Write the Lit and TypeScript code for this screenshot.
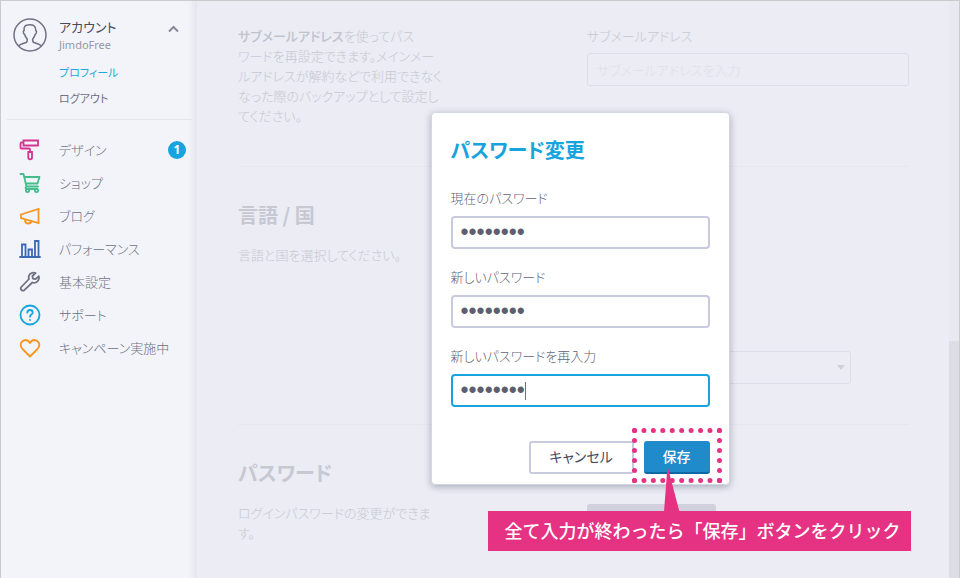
import { LitElement, html, css, svg } from "lit";
import { customElement } from "lit/decorators.js";

const icon = (color: string, body: unknown) => html`<svg
  width="22"
  height="22"
  viewBox="0 0 22 22"
  fill="none"
  stroke=${color}
  stroke-width="1.8"
  stroke-linejoin="round"
  stroke-linecap="round"
  aria-hidden="true"
>${body}</svg>`;

const MENU = [
  {
    label: "デザイン",
    badge: 1,
    icon: icon("#d3358f", svg`<path stroke-linejoin="miter" d="M4.500 1.500h14.500v5H4.500zM4.500 3.500H2.500Q1.500 3.500 1.500 4.500V8.500q0 1 1 1h7.500q1 0 1 1V13M9.300 13h3.700v5.500q0 1.800-1.850 1.800t-1.850-1.800z"/>`),
  },
  {
    label: "ショップ",
    icon: icon("#43bd89", svg`<path d="M1.500 2H4.500L7.500 14.500H19M5.500 5H20.500L18.500 11.500H7M7.500 14.500q-1.500 1-.5 2.500H18"/><circle cx="8.500" cy="18.500" r="1.600"/><circle cx="17.500" cy="18.500" r="1.600"/>`),
  },
  {
    label: "ブログ",
    icon: icon("#f9951d", svg`<path stroke-linejoin="miter" d="M2 9.500L19.500 4v14L2 13zM6 14.500q0 4 3 4t3.500-2.500"/>`),
  },
  {
    label: "パフォーマンス",
    icon: icon("#3a68b3", svg`<path stroke-linejoin="miter" d="M1 19h20M3 19V6.500h3.500V19M9.500 19v-7.500H13V19M16 19V3h3.500v16"/>`),
  },
  {
    label: "基本設定",
    icon: icon("#6d7182", svg`<path d="M19.800 5.200l-3.300 2.900-2.600-.5-.5-2.600L16.600 2q-3.200-1.200-5.600 1-2 2.200-1 5L2.300 16q-1.200 1.500 0 2.900t3 .3L13.300 11.500q3 1 5.200-1.100 2.100-2.300 1.300-5.200z"/>`),
  },
  {
    label: "サポート",
    icon: icon("#17a3de", svg`<circle cx="11" cy="11" r="9.500"/><path stroke-width="1.800" d="M8.300 8.700q0-2.700 2.700-2.700t2.700 2.500q0 1.200-1.400 2.100T11 12.800M11 15.800v.2"/>`),
  },
  {
    label: "キャンペーン実施中",
    icon: icon("#f9951d", svg`<path d="M11 19.500L3.500 12Q.5 8.500 2.300 5.500 4 3 6.800 3 9.500 3.200 11 6 12.500 3.200 15.200 3q2.800 0 4.500 2.500 1.800 3-1.200 6.500z"/>`),
  },
];

const FIELDS = [
  { id: "current", label: "現在のパスワード" },
  { id: "next", label: "新しいパスワード" },
  { id: "repeat", label: "新しいパスワードを再入力", active: true },
];

@customElement("app-sidebar")
class AppSidebar extends LitElement {
  static styles = css`
    :host {
      display: block;
      box-sizing: border-box;
      padding: 16px 5px 16px 6px;
      background: linear-gradient(to left, #e4e6ee 0, #f3f4f9 9px);
      color: #6d7182;
      font-size: 13px;
    }
    .account {
      display: grid;
      grid-template-columns: 34px 1fr 14px;
      column-gap: 12px;
      align-items: start;
      padding: 0 12px 0 6px;
    }
    .avatar { margin-top: 1px; }
    .name { line-height: 19px; font-size: 13px; color: #464a5c; font-weight: 400; }
    .plan { font: 11px/17px "Noto Sans", sans-serif; color: #9598a6; }
    .toggle {
      border: 0;
      padding: 0;
      margin-top: 4px;
      height: 16px;
      background: none;
      color: #858998;
    }
    .links {
      display: flex;
      flex-direction: column;
      gap: 6px;
      padding: 9px 0 11px 52px;
      border-bottom: 1px solid #e2e4eb;
      font-size: 11px;
      line-height: 20px;
      font-weight: 400;
    }
    a { color: inherit; text-decoration: none; }
    .links .current { color: #1ea7e0; }
    ul { list-style: none; margin: 0; padding: 13px 6px 0 12px; }
    .item { display: flex; align-items: center; height: 33px; }
    .item svg { flex: none; margin-right: 18px; }
    .text { flex: 1; white-space: nowrap; }
    .badge {
      width: 18px;
      height: 18px;
      border-radius: 50%;
      background: #17a3de;
      color: #fff;
      text-align: center;
      font: bold 12px/18px "Noto Sans", sans-serif;
    }
  `;

  render() {
    return html`
      <div class="account">
        <svg class="avatar" width="34" height="34" viewBox="0 0 34 34" fill="none" stroke="#6d7182" stroke-width="1.500" aria-hidden="true">
          <circle cx="17" cy="17" r="16" />
          <path d="M5.500 28q1-1.500 7.500-3.500 1.500-.6 1.200-3.500-2-2-2.500-4.500-1.400-.5-1.400-2.700 0-1.200.8-1.300Q10.500 7.500 14.500 7q8.500-1.500 8.300 5.500.8.100.7 1.500-.2 2.100-1.400 2.500-.5 2.500-2.400 4.500-.3 2.900 1.200 3.500 6.500 2 7.500 3.500" />
        </svg>
        <div>
          <div class="name">アカウント</div>
          <div class="plan">JimdoFree</div>
        </div>
        <button class="toggle" aria-label="アカウントメニューを閉じる" aria-expanded="true">
          <svg width="14" height="10" viewBox="0 0 14 10" fill="none" stroke="currentColor" stroke-width="2"><path d="M3 7.500l4.500-4.500L12 7.500" /></svg>
        </button>
      </div>
      <div class="links">
        <a class="current" href="#profile">プロフィール</a>
        <a href="#logout">ログアウト</a>
      </div>
      <nav>
        <ul>
          ${MENU.map(
            (m) => html`<li>
              <a class="item" href="#menu">${m.icon}<span class="text">${m.label}</span>${m.badge ? html`<span class="badge">${m.badge}</span>` : ""}</a>
            </li>`
          )}
        </ul>
      </nav>
    `;
  }
}

@customElement("app-profile")
class AppProfile extends LitElement {
  static styles = css`
    :host { display: block; color: #c6c8d4; font-size: 13px; line-height: 20px; }
    section {
      display: grid;
      grid-template-columns: 30% 48%;
      justify-content: space-between;
      padding: 28px 0 40px;
      border-top: 1px solid #e6e7ef;
    }
    section:first-child { border-top: 0; padding-top: 25px; }
    h2 { margin: 0 0 10px; font-size: 20px; line-height: 40px; font-weight: 700; color: #c6c8d2; }
    p { margin: 0; white-space: nowrap; }
    b { font-weight: 500; color: #c0c2ce; }
    label { display: block; margin-bottom: 7px; }
    input, select {
      box-sizing: border-box;
      height: 33px;
      border: 1px solid #dbdde8;
      border-radius: 3px;
      padding: 0 9px;
      background: transparent;
      font: inherit;
      color: inherit;
    }
    input { width: 100%; }
    input::placeholder { color: #dfe0ea; opacity: 1; }
    .pick { position: relative; width: 82%; margin-top: 156px; }
    select { display: block; width: 100%; appearance: none; }
    .arrow { position: absolute; right: 6px; top: 14px; }
    .change {
      width: 40%;
      height: 33px;
      margin-top: 51px;
      border: 0;
      border-radius: 3px;
      background: #d0d1dd;
    }
  `;

  render() {
    return html`
      <section>
        <p>
          <b>サブメールアドレス</b>を使ってパス<br />ワードを再設定できます。メインメー<br />ルアドレスが解約などで利用できなく<br />なった際のバックアップとして設定し<br />てください。
        </p>
        <div>
          <label for="mail">サブメールアドレス</label>
          <input id="mail" type="email" placeholder="サブメールアドレスを入力" />
        </div>
      </section>
      <section>
        <div>
          <h2>言語 / 国</h2>
          <p>言語と国を選択してください。</p>
        </div>
        <div class="pick">
          <select aria-label="国"><option></option></select>
          <svg class="arrow" width="8" height="5" viewBox="0 0 8 5" fill="#cfd0db" aria-hidden="true"><path d="M0 0h8L4 5z" /></svg>
        </div>
      </section>
      <section>
        <div>
          <h2>パスワード</h2>
          <p>ログインパスワードの変更ができま<br />す。</p>
        </div>
        <div><button class="change" aria-label="パスワードを変更"></button></div>
      </section>
    `;
  }
}

@customElement("password-dialog")
class PasswordDialog extends LitElement {
  static styles = css`
    :host {
      display: block;
      box-sizing: border-box;
      width: 299px;
      padding: 20px 19px 10px;
      border: 1px solid #d3d6e3;
      border-radius: 4px;
      background: #fff;
      box-shadow: 0 2px 7px rgba(70, 74, 100, 0.4);
      color: #5f6374;
      font-size: 13px;
      line-height: 20px;
    }
    h1 { margin: 0 0 21px; font-size: 20px; line-height: 34px; font-weight: 700; color: #17a3de; }
    label { display: block; margin-bottom: 8px; }
    .field { margin-bottom: 18px; }
    .box { position: relative; }
    input {
      display: block;
      box-sizing: border-box;
      width: 100%;
      height: 33px;
      padding: 0 8px;
      border: 2px solid #c8cbdd;
      border-radius: 4px;
      outline: 0;
      color: #5b5f70;
      font: 23px "Liberation Sans", sans-serif;
    }
    .active input { border-color: #17a3de; }
    .caret { position: absolute; left: 74px; top: 8px; width: 1px; height: 18px; background: #6d7182; }
    .actions { display: flex; justify-content: flex-end; gap: 10px; margin-top: 34px; }
    button {
      box-sizing: border-box;
      height: 33px;
      border-radius: 3px;
      font: inherit;
      font-size: 14px;
      font-feature-settings: inherit;
    }
    .cancel { width: 105px; padding: 0 0 3px; border: 2px solid #c8cbdd; background: #fff; color: #464a5c; font-weight: 400; }
    .save { display: block; width: 66px; padding: 0 0 2px; border: 0; border-bottom: 2px solid #0d68a5; background: #1f8bcb; color: #fff; font-weight: 500; }
    .target { position: relative; }
    .ring { position: absolute; inset: -13px -12px -9px -12px; border: 5px dotted #e63282; pointer-events: none; }
    .pointer { position: absolute; left: 20px; top: 25px; }
    .callout {
      position: absolute;
      top: 70px;
      left: -156px;
      padding: 0 10px 2px 17px;
      background: #e63282;
      color: #fff;
      font-size: 18px;
      line-height: 38px;
      font-weight: 500;
      font-feature-settings: normal;
      white-space: nowrap;
    }
  `;

  render() {
    return html`
      <form @submit=${(e: Event) => e.preventDefault()}>
        <h1>パスワード変更</h1>
        ${FIELDS.map(
          (f) => html`<div class="field ${f.active ? "active" : ""}">
            <label for=${f.id}>${f.label}</label>
            <div class="box">
              <input id=${f.id} type="password" .value=${"password"} />
              ${f.active ? html`<span class="caret"></span>` : ""}
            </div>
          </div>`
        )}
        <div class="actions">
          <button class="cancel" type="button">キャンセル</button>
          <div class="target">
            <button class="save" type="submit">保存</button>
            <div class="ring"></div>
            <svg class="pointer" width="16" height="46" viewBox="0 0 16 46" fill="#e63282" aria-hidden="true"><path d="M3.500 0L15.500 46H0z" /></svg>
            <div class="callout">全て入力が終わったら「保存」ボタンをクリック</div>
          </div>
        </div>
      </form>
    `;
  }
}

@customElement("app-root")
class AppRoot extends LitElement {
  static styles = css`
    :host {
      display: grid;
      grid-template-columns: 196px 1fr;
      box-sizing: border-box;
      min-height: 100vh;
      border: 1px solid #cbcbcd;
      font-family: "Noto Sans CJK JP", sans-serif;
      font-weight: 300;
      font-feature-settings: "palt";
    }
    main { position: relative; display: grid; grid-template-columns: 1fr 10px; background: #ebecf4; overflow: hidden; }
    .page { padding: 0 40px 0 41px; }
    .track { display: flex; flex-direction: column; justify-content: flex-end; background: #e9eaf1; }
    .thumb { height: 41.500%; background: #dcdde6; }
    .layer { position: absolute; inset: 0; display: flex; justify-content: center; align-items: flex-start; padding: 111px 0 0 4px; }
  `;

  render() {
    return html`
      <app-sidebar></app-sidebar>
      <main>
        <app-profile class="page"></app-profile>
        <div class="track"><div class="thumb"></div></div>
        <div class="layer"><password-dialog role="dialog" aria-label="パスワード変更"></password-dialog></div>
      </main>
    `;
  }
}
